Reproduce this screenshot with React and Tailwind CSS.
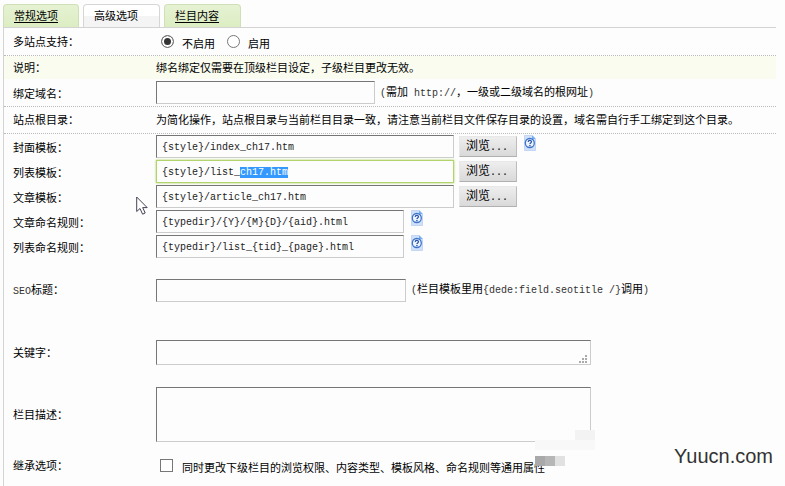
import { useEffect, useRef } from "react";

const inputBase =
  "h-[23px] rounded-none border border-t-[#767676] border-l-[#767676] border-r-[#cccccc] border-b-[#cccccc] bg-[#fdfdfd] px-[5px] pt-[2px] font-['Liberation_Mono',monospace] text-[10px] text-[#222222] outline-none";

const HelpIcon = () => (
  <svg width="12" height="16" viewBox="0 0 12 16" className="block">
    <path d="M0.5 0.5H8.5L11.5 3.5V15.5H0.5Z" fill="#cfe0fa" stroke="#c3d6f5" />
    <path d="M8 0.5V4H11.5Z" fill="#6fabf0" />
    <circle cx="5.8" cy="8" r="4.5" fill="#eef4ff" stroke="#3f74c8" strokeWidth="1.3" />
    <path
      d="M4.2 7C4.2 4.9 7.5 4.9 7.5 6.8C7.5 7.9 5.9 8 5.9 9.1"
      fill="none"
      stroke="#2a56aa"
      strokeWidth="1.2"
    />
    <rect x="5.2" y="9.9" width="1.4" height="1.3" fill="#2a56aa" />
  </svg>
);

const Help = () => (
  <button type="button" aria-label="帮助" className="mb-2 ml-[7px]">
    <HelpIcon />
  </button>
);

const Browse = () => (
  <button
    type="button"
    className="ml-[5px] h-[21px] w-[58px] border border-t-[#e8e8e8] border-l-[#e8e8e8] border-r-[#bcbcbc] border-b-[#b0b0b0] bg-linear-to-b from-[#eeeeee] to-[#d9d9d9] text-left text-[12px] leading-[18px]"
  >
    <span className="pl-[6px]">浏览</span>
    <span className="font-['Liberation_Mono',monospace] text-[10px]">...</span>
  </button>
);

const Mono = ({ children }) => (
  <span className="font-['Liberation_Mono',monospace] text-[10px] whitespace-pre text-[#333333]">
    {children}
  </span>
);

const Row = ({ label, htmlFor, className, children }) => (
  <div className={`flex items-center pl-[9px] ${className}`}>
    {htmlFor ? (
      <label htmlFor={htmlFor} className="w-[143px] shrink-0 pt-[2px]">
        {label}
      </label>
    ) : (
      <div className="w-[143px] shrink-0">{label}</div>
    )}
    {children}
  </div>
);

const Tabs = () => (
  <nav className="flex gap-1 pt-1">
    <a
      href="#general"
      className="h-[23px] w-[76px] rounded-t-[4px] border border-b-0 border-[#cfe0b8] bg-linear-to-b from-[#e6f2d3] to-[#dcedc2] pl-[10px] leading-[22px] underline underline-offset-2"
    >
      常规选项
    </a>
    <span
      aria-current="page"
      className="h-[23px] w-[77px] rounded-t-[4px] border border-b-0 border-[#d6d6d6] bg-linear-to-b from-[#ffffff] from-50% to-[#f4f4f4] to-50% pl-[10px] leading-[22px]"
    >
      高级选项
    </span>
    <a
      href="#content"
      className="h-[23px] w-[77px] rounded-t-[4px] border border-b-0 border-[#cfe0b8] bg-linear-to-b from-[#e6f2d3] to-[#dcedc2] pl-[10px] leading-[22px] underline underline-offset-2"
    >
      栏目内容
    </a>
  </nav>
);

const App = () => {
  const listRef = useRef(null);

  useEffect(() => {
    const input = listRef.current;
    input.focus();
    input.setSelectionRange(13, input.value.length);
  }, []);

  return (
    <div className="relative min-h-screen overflow-x-hidden bg-[#fdfdfd] pr-[9px] pl-[3px] font-['Liberation_Sans','Noto_Sans_CJK_SC',sans-serif] text-[11px] leading-4 text-black">
      <Tabs />
      <form className="border-t border-l border-[#d3d3d3]">
        <Row label="多站点支持：" className="h-7 border-b border-dotted border-[#bbbbbb]">
          <input
            type="radio"
            id="multi-off"
            name="multi"
            defaultChecked
            className="ml-[5px] size-[13px] appearance-none rounded-full border border-[#777777] bg-white checked:bg-[#333333] checked:shadow-[inset_0_0_0_2px_#ffffff]"
          />
          <label htmlFor="multi-off" className="mt-1 ml-[8px]">
            不启用
          </label>
          <input
            type="radio"
            id="multi-on"
            name="multi"
            className="ml-[12px] size-[13px] appearance-none rounded-full border border-[#777777] bg-white checked:bg-[#333333] checked:shadow-[inset_0_0_0_2px_#ffffff]"
          />
          <label htmlFor="multi-on" className="mt-1 ml-[8px]">
            启用
          </label>
        </Row>
        <Row label="说明：" className="h-[23px] bg-[#f9fcef]">
          <p className="whitespace-nowrap">绑名绑定仅需要在顶级栏目设定，子级栏目更改无效。</p>
        </Row>
        <Row label="绑定域名：" htmlFor="domain" className="h-7 border-b border-dotted border-[#bbbbbb]">
          <input id="domain" type="text" className={`${inputBase} w-[219px]`} />
          <span className="ml-[5px] whitespace-nowrap">
            <Mono>(</Mono>需加<Mono> http://</Mono>，一级或二级域名的根网址<Mono>)</Mono>
          </span>
        </Row>
        <Row label="站点根目录：" className="h-[27px] border-b border-dotted border-[#bbbbbb]">
          <p className="whitespace-nowrap">
            为简化操作，站点根目录与当前栏目目录一致，请注意当前栏目文件保存目录的设置，域名需自行手工绑定到这个目录。
          </p>
        </Row>
        <Row label="封面模板：" htmlFor="tempindex" className="h-[25px]">
          <input
            id="tempindex"
            type="text"
            defaultValue="{style}/index_ch17.htm"
            className={`${inputBase} w-[298px]`}
          />
          <Browse />
          <Help />
        </Row>
        <Row label="列表模板：" htmlFor="templist" className="h-[25px]">
          <input
            id="templist"
            ref={listRef}
            type="text"
            defaultValue="{style}/list_ch17.htm"
            className={`${inputBase} w-[298px] selection:bg-[#3399ff] selection:text-white focus:border-[#b2d46e] focus:shadow-[0_0_2px_#a8d052]`}
          />
          <Browse />
        </Row>
        <Row label="文章模板：" htmlFor="temparticle" className="h-[25px]">
          <input
            id="temparticle"
            type="text"
            defaultValue="{style}/article_ch17.htm"
            className={`${inputBase} w-[298px]`}
          />
          <Browse />
        </Row>
        <Row label="文章命名规则：" htmlFor="namerule" className="h-[25px]">
          <input
            id="namerule"
            type="text"
            defaultValue="{typedir}/{Y}/{M}{D}/{aid}.html"
            className={`${inputBase} w-[248px]`}
          />
          <Help />
        </Row>
        <Row label="列表命名规则：" htmlFor="namerule2" className="h-[25px]">
          <input
            id="namerule2"
            type="text"
            defaultValue="{typedir}/list_{tid}_{page}.html"
            className={`${inputBase} w-[248px]`}
          />
          <Help />
        </Row>
        <Row label={<><Mono>SEO</Mono>标题：</>} htmlFor="seotitle" className="h-[62px]">
          <input id="seotitle" type="text" className={`${inputBase} w-[250px]`} />
          <span className="ml-[5px] whitespace-nowrap">
            <Mono>(</Mono>栏目模板里用<Mono>{"{dede:field.seotitle /}"}</Mono>调用<Mono>)</Mono>
          </span>
        </Row>
        <Row label="关键字：" htmlFor="keywords" className="h-[62px]">
          <div className="relative">
            <textarea
              id="keywords"
              className={`${inputBase} block h-[25px] w-[435px] resize-none`}
            />
            <svg
              width="8"
              height="8"
              viewBox="0 0 8 8"
              fill="#aaaaaa"
              className="absolute right-1 bottom-[2px]"
            >
              <path d="M6 0h2v2H6zM3 3h2v2H3zM6 3h2v2H6zM0 6h2v2H0zM3 6h2v2H3zM6 6h2v2H6z" />
            </svg>
          </div>
        </Row>
        <Row label="栏目描述：" htmlFor="description" className="h-[62px]">
          <div className="relative">
            <textarea
              id="description"
              className={`${inputBase} block h-[55px] w-[435px] resize-none`}
            />
            <div className="absolute -right-1 -bottom-2 flex w-[60px] flex-col items-end">
              <div className="h-[10px] w-5 bg-[#f3f3f3]" />
              <div className="h-[10px] w-full bg-[#f8f8f8]" />
            </div>
          </div>
        </Row>
        <Row label="继承选项：" className="h-[41px]">
          <input
            id="upnext"
            type="checkbox"
            className="ml-1 size-[13px] appearance-none border border-[#777777] bg-white checked:bg-[#777777]"
          />
          <label htmlFor="upnext" className="relative mt-1 ml-[9px] whitespace-nowrap">
            同时更改下级栏目的浏览权限、内容类型、模板风格、命名规则等通用属性
            <span className="absolute bottom-[10px] left-[353px] flex">
              <span className="size-[10px] bg-[#a9a9a9]" />
              <span className="size-[10px] bg-[#b6b6b6]" />
              <span className="size-[10px] bg-[#e1e1e1]" />
            </span>
          </label>
        </Row>
      </form>

      <svg
        width="12"
        height="20"
        viewBox="0 0 12 20"
        fill="#ffffff"
        stroke="#444455"
        className="pointer-events-none absolute top-[196px] left-[136px]"
      >
        <path d="M0.7 1V15.5L4 12.5L6.6 18.2L9.2 17L6.7 11.6H11.2Z" />
      </svg>
      <div className="pointer-events-none absolute right-3 bottom-4 font-['Liberation_Sans',sans-serif] text-[20px] leading-7 text-[#333333]">
        Yuucn.com
      </div>
    </div>
  );
};

export default App;
